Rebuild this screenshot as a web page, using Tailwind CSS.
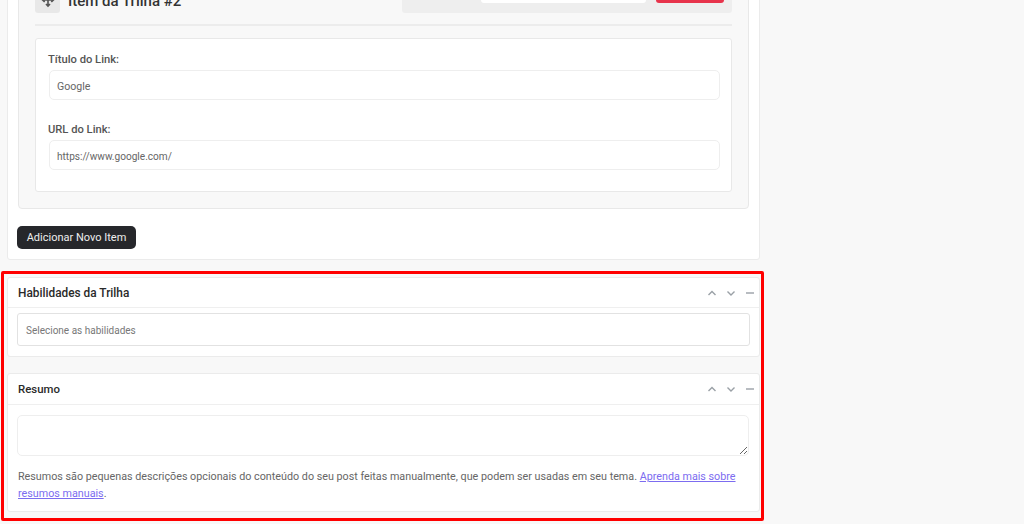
<!DOCTYPE html>
<html lang="pt">
<head>
<meta charset="utf-8">
<script src="https://cdn.jsdelivr.net/npm/@tailwindcss/browser@4"></script>
</head>
<body class="bg-[#f8f8f8] font-['Roboto',sans-serif] text-[#50575e]">
<div class="relative h-[524px] w-[1024px] overflow-hidden">
  <main class="ml-[7px] w-[753px] -mt-[20px]">
    <section class="h-[280px] rounded-[3px] border border-[#ebebeb] bg-white px-[10px] pt-0">
      <div class="h-[228px] rounded-[4px] border border-[#e8e8e8] bg-[#f8f8f8] px-4">
        <div class="flex h-[44px] items-start justify-between border-b-2 border-[#ececec]">
          <div class="mt-[7px] flex items-center gap-2">
            <div class="flex h-6 w-[25px] items-center justify-center rounded-[3px] bg-[#e8e8e8]">
              <svg class="-mt-[2px] h-[16px] w-[16px] text-[#555]" viewBox="0 0 24 24" fill="none" stroke="currentColor" stroke-width="2.5"><path d="M12 3v18M4 12h16M9 6l3-3 3 3M9 18l3 3 3-3M7 9l-3 3 3 3M17 9l3 3-3 3"/></svg>
            </div>
            <h3 class="text-[15px] font-medium text-[#333]">Item da Trilha #2</h3>
          </div>
          <div class="flex h-[31px] w-[330px] items-start gap-[10px] rounded-[3px] bg-[#eeeeee] pl-[79px]">
            <div class="h-[21px] w-[165px] rounded-b-[3px] bg-white"></div>
            <div class="h-[21px] w-[68px] rounded-b-[3px] bg-[#e7334b]"></div>
          </div>
        </div>
        <div class="mt-[12px] h-[154px] rounded-[3px] border border-[#e8e8e8] bg-white pt-[12px] pr-[11px] pl-[12px]">
          <label class="block text-[11.2px] leading-[17px] font-medium text-[#555]">Título do Link:</label>
          <div class="mt-[2px] ml-[1px] flex h-[30px] items-center rounded-[5px] border border-[#eeeeee] px-[7px] pt-[3px] text-[10.6px] text-[#666]">Google</div>
          <label class="mt-[21px] block text-[11.2px] leading-[17px] font-medium text-[#555]">URL do Link:</label>
          <div class="mt-[2px] ml-[1px] flex h-[30px] items-center rounded-[5px] border border-[#eeeeee] px-[7px] pt-[4px] text-[10.1px] text-[#666]">https://www.google.com/</div>
        </div>
      </div>
      <button class="-ml-[1px] mt-[17px] h-[23px] w-[119px] rounded-[5px] bg-[#26272b] pt-[2px] text-center text-[11px] text-[#eeeeee]">Adicionar Novo Item</button>
    </section>

    <section class="mt-[17px] h-[80px] rounded-[3px] border border-[#ebebeb] bg-white">
      <div class="flex h-[30px] items-center justify-between border-b border-[#efefef] pr-[4px] pl-[10px]">
        <h2 class="mt-[2px] text-[11.85px] font-medium text-[#2a2a2a]">Habilidades da Trilha</h2>
        <div class="flex items-center gap-[9px] text-[#9aa0a6]">
          <svg class="h-[10px] w-[10px]" viewBox="0 0 10 10" fill="none" stroke="currentColor" stroke-width="1.4"><path d="M1.5 7 5 3.5 8.5 7"/></svg>
          <svg class="h-[10px] w-[10px]" viewBox="0 0 10 10" fill="none" stroke="currentColor" stroke-width="1.4"><path d="M1.5 3.5 5 7 8.5 3.5"/></svg>
          <svg class="h-[10px] w-[10px]" viewBox="0 0 10 10" fill="none" stroke="currentColor" stroke-width="1.4"><path d="M1 5h8"/></svg>
        </div>
      </div>
      <div class="mx-[9px] mt-[5px] flex h-[33px] items-center rounded-[3px] border border-[#e2e2e2] px-2 pt-[2px] text-[10px] text-[#777]">Selecione as habilidades</div>
    </section>

    <section class="mt-[16px] h-[139px] rounded-[3px] border border-[#ebebeb] bg-white">
      <div class="flex h-[31px] items-center justify-between border-b border-[#efefef] pr-[4px] pl-[10px]">
        <h2 class="mt-[1px] text-[11.4px] font-medium text-[#2a2a2a]">Resumo</h2>
        <div class="flex items-center gap-[9px] text-[#9aa0a6]">
          <svg class="h-[10px] w-[10px]" viewBox="0 0 10 10" fill="none" stroke="currentColor" stroke-width="1.4"><path d="M1.5 7 5 3.5 8.5 7"/></svg>
          <svg class="h-[10px] w-[10px]" viewBox="0 0 10 10" fill="none" stroke="currentColor" stroke-width="1.4"><path d="M1.5 3.5 5 7 8.5 3.5"/></svg>
          <svg class="h-[10px] w-[10px]" viewBox="0 0 10 10" fill="none" stroke="currentColor" stroke-width="1.4"><path d="M1 5h8"/></svg>
        </div>
      </div>
      <textarea class="mx-[9px] mt-[10px] block h-[41px] w-[732px] rounded-[5px] border border-[#eeeeee]"></textarea>
      <p class="mx-[10px] mt-[12px] text-[10.75px] leading-[17px] text-[#666]">Resumos são pequenas descrições opcionais do conteúdo do seu post feitas manualmente, que podem ser usadas em seu tema. <a href="#" class="text-[#7c6cf0] underline">Aprenda mais sobre resumos manuais</a>.</p>
    </section>
  </main>
  <div class="pointer-events-none absolute left-[1px] top-[271px] h-[250px] w-[763px] rounded-[2px] border-[3px] border-[#ff0000]"></div>
</div>
</body>
</html>
